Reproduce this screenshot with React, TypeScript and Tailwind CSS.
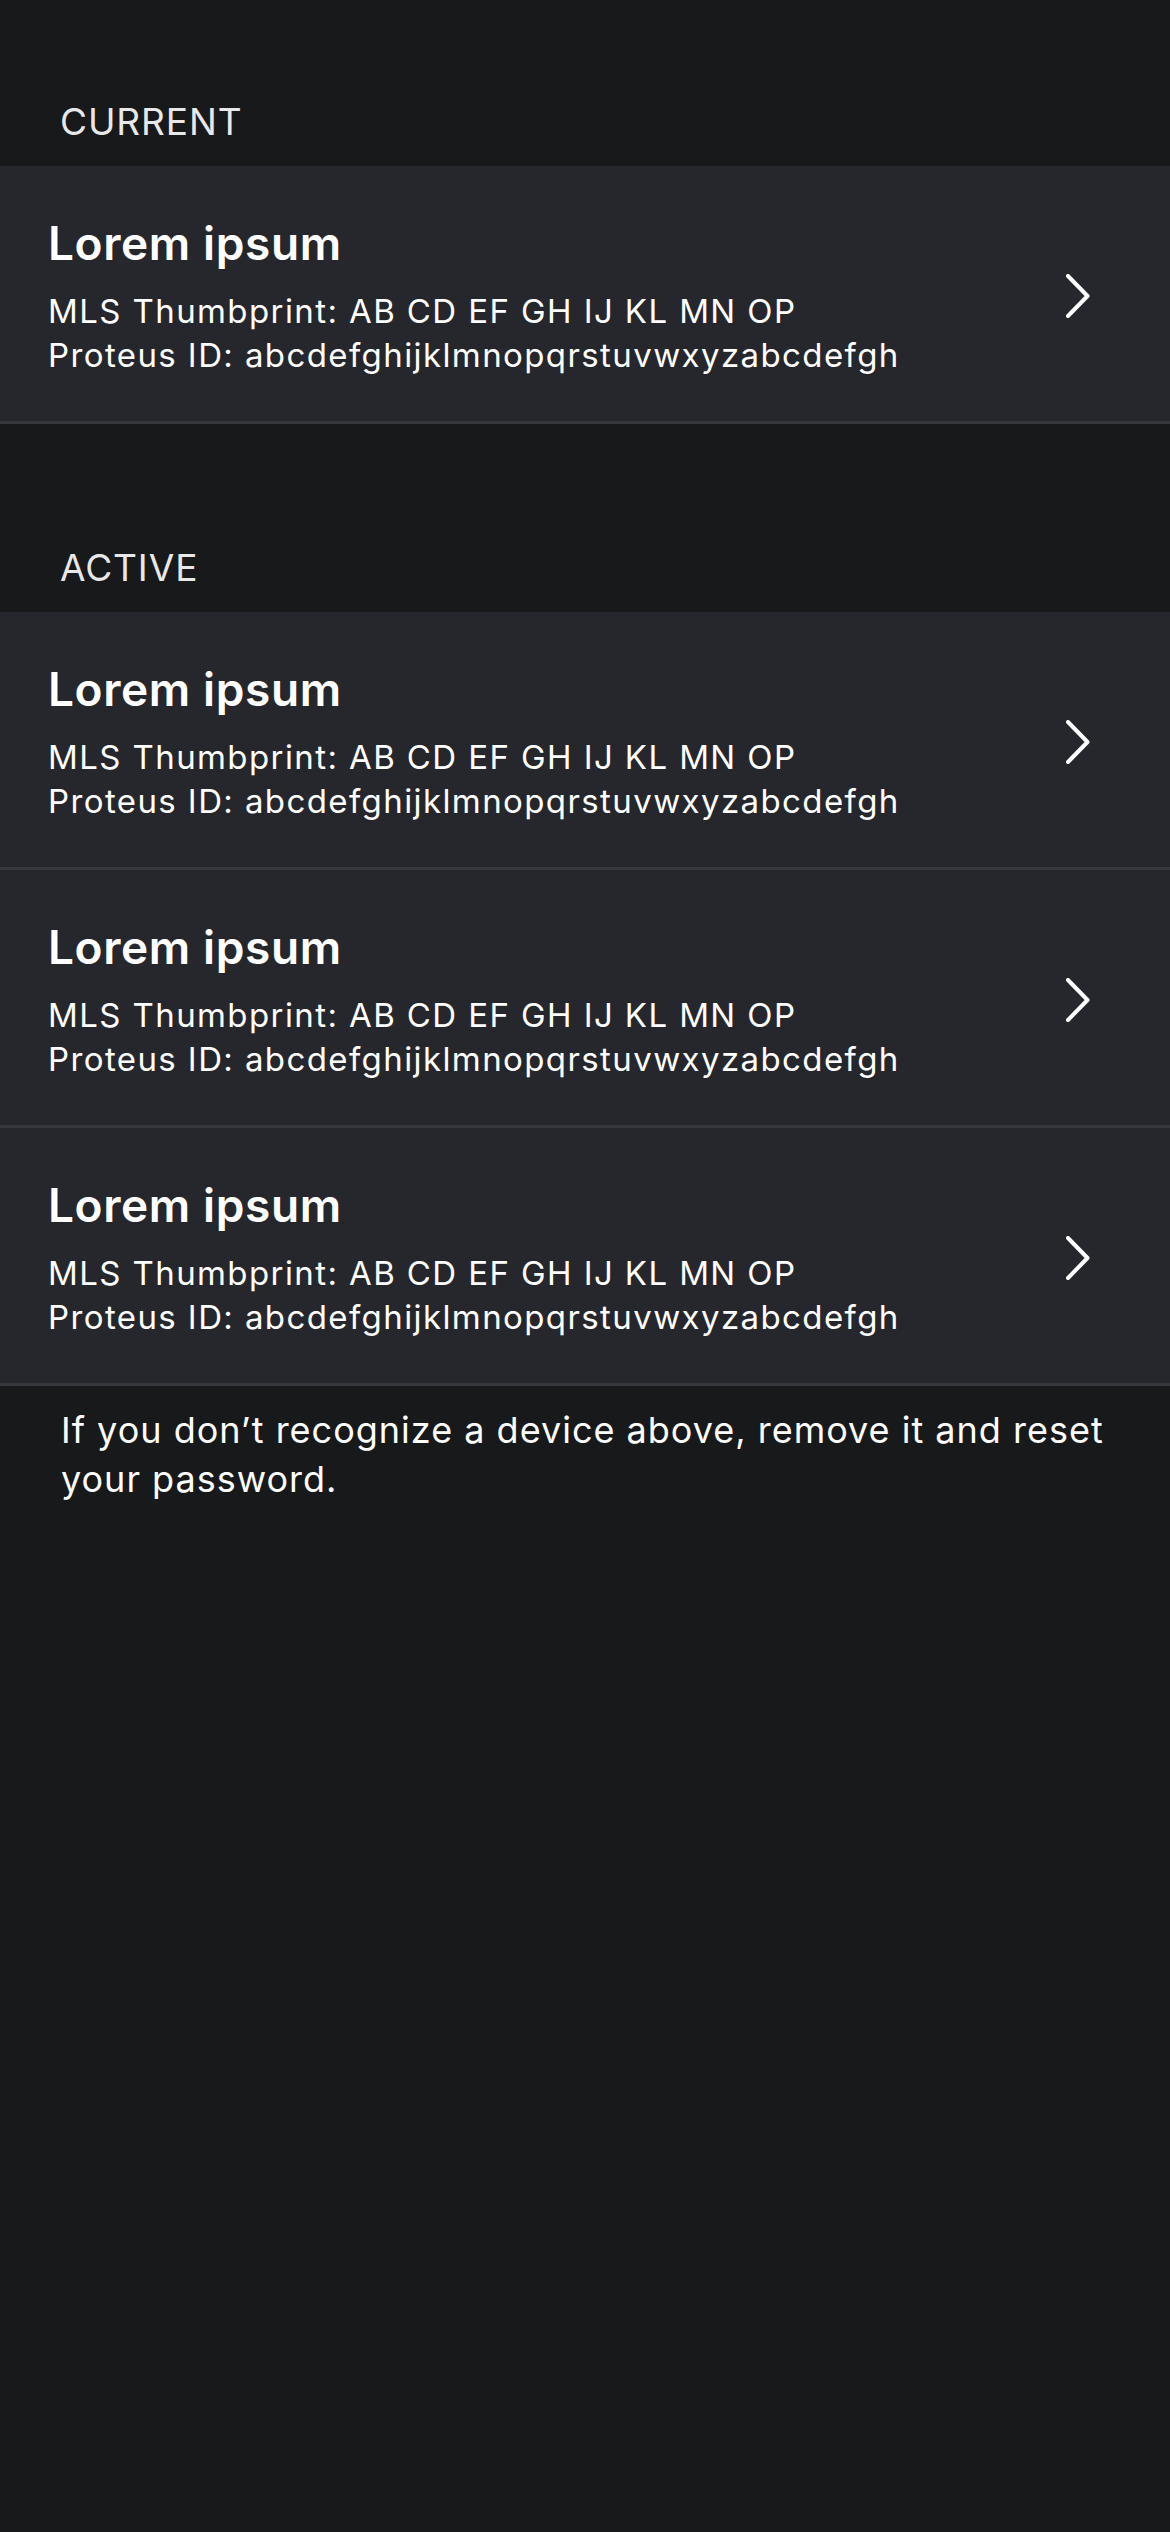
import React from "react";

type Device = {
  name: string;
  thumbprint: string;
  proteusId: string;
};

const device: Device = {
  name: "Lorem ipsum",
  thumbprint: "AB CD EF GH IJ KL MN OP",
  proteusId: "abcdefghijklmnopqrstuvwxyzabcdefgh",
};

function Chevron() {
  return (
    <svg width="24" height="44" viewBox="0 0 24 44" fill="none" className="shrink-0">
      <path d="M2 2 L21.5 22 L2 42" stroke="white" strokeWidth="4" strokeLinecap="round" strokeLinejoin="round" />
    </svg>
  );
}

function DeviceRow({ d }: { d: Device }) {
  return (
    <div className="flex items-center bg-[#26272c] border-b-[3px] border-[#37383d] pl-[48px] pr-[80px] pt-[49px] pb-[44px]">
      <div className="flex-1 min-w-0">
        <div className="text-[46px] leading-[56px] font-semibold tracking-[0.6px] text-white mb-[18px]">{d.name}</div>
        <div className="text-[33px] leading-[44px] tracking-[1.4px] text-white">MLS Thumbprint: {d.thumbprint}</div>
        <div className="text-[33px] leading-[44px] tracking-[1.4px] text-white">Proteus ID: {d.proteusId}</div>
      </div>
      <Chevron />
    </div>
  );
}

function SectionHeader({ title, tall }: { title: string; tall?: boolean }) {
  return (
    <div className={`flex items-end px-[60px] pb-[22px] ${tall ? "h-[188px]" : "h-[166px]"}`}>
      <span className="text-[37px] leading-[44px] tracking-[0.9px] text-[#e8e8ea]">{title}</span>
    </div>
  );
}

export default function App() {
  return (
    <div
      className="min-h-[2532px] w-full bg-[#18191b]"
      style={{ fontFamily: 'Inter, "Noto Sans", sans-serif' }}
    >
      <SectionHeader title="CURRENT" />
      <DeviceRow d={device} />

      <SectionHeader title="ACTIVE" tall />
      <DeviceRow d={device} />
      <DeviceRow d={device} />
      <DeviceRow d={device} />

      <p className="pl-[61px] pr-[30px] pt-[20px] text-[36px] leading-[49px] tracking-[1px] text-white">
        If you don’t recognize a device above, remove it and reset your password.
      </p>
    </div>
  );
}
